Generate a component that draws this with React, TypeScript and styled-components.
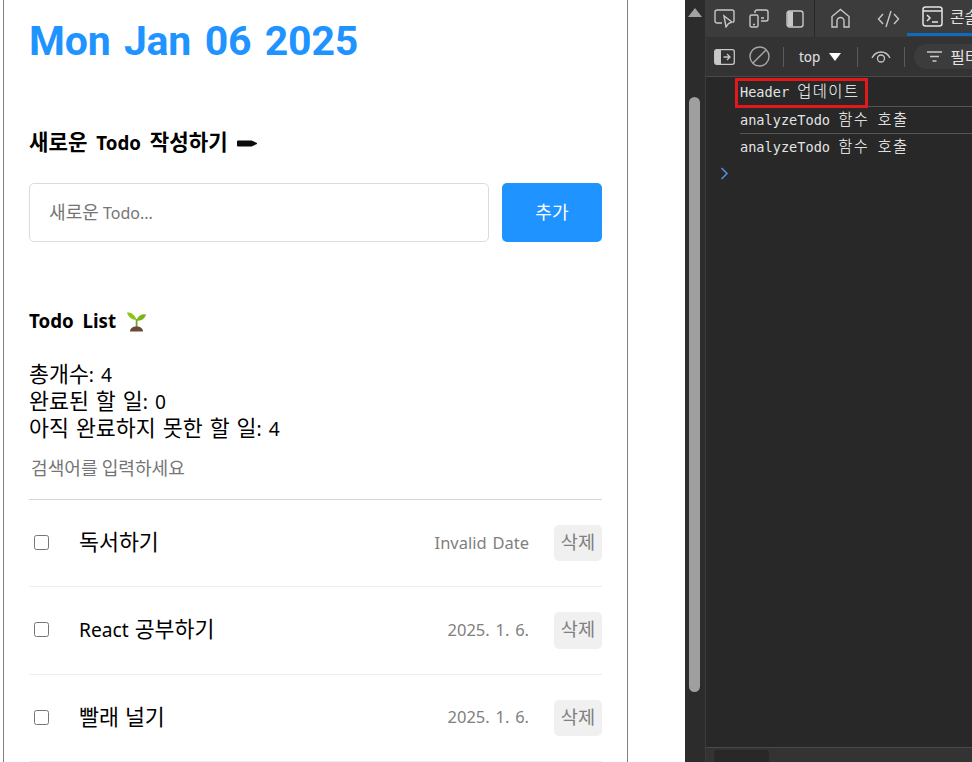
import React from "react";
import styled, { createGlobalStyle } from "styled-components";

const Global = createGlobalStyle`
  html, body { margin: 0; padding: 0; height: 100%; overflow: hidden; background: #fff; }
  body { font-family: "Noto Sans", "Noto Sans CJK KR", sans-serif; }
  * { box-sizing: border-box; }
`;
const KR = `"Noto Sans", "Noto Sans CJK KR", sans-serif`;
const MONO = `"DejaVu Sans Mono", "Noto Sans CJK KR", monospace`;

const Hangul = styled.span`
  display: inline-block;
  font-family: "Noto Sans CJK KR", sans-serif;
  font-size: 1.13em;
  line-height: 1;
`;
const K = ({ children }: { children: string }) => (
  <>
    {children.split(/([\uAC00-\uD7A3]+)/).map((part, i) =>
      i % 2 ? <Hangul key={i}>{part}</Hangul> : part,
    )}
  </>
);

const Page = styled.div`
  display: flex; width: 972px; height: 762px; overflow: hidden; background: #fff;
`;
const Viewport = styled.div`
  width: 685px; height: 762px; padding-left: 3px; flex: none; overflow: hidden;
`;
const AppBox = styled.main`
  width: 625px; border-left: 1px solid #7f7f7f; border-right: 1px solid #7f7f7f;
  height: 762px; padding: 0 25px; font-family: ${KR}; color: #000; overflow: hidden;
`;
const DateTitle = styled.h1`
  margin: 0; padding-top: 14px; height: 130px; color: #1f93ff; font-size: 41px; line-height: 55px;
  font-family: Roboto, sans-serif; font-weight: 700; letter-spacing: -0.2px; word-spacing: 3.5px;
`;
const SectionTitle = styled.h4`
  margin: 0; font-size: 18.72px; line-height: 26px; height: 26px; font-weight: 700;
  display: flex; align-items: center; word-spacing: 4px; white-space: pre;
`;
const Editor = styled.section`
  display: flex; gap: 13px; margin-top: 27px; margin-bottom: 66px;
`;
const NewInput = styled.div`
  flex: 1; height: 59px; border: 1px solid #dcdcdc; border-radius: 5px; padding-left: 19px;
  display: flex; align-items: center; font-size: 16px; color: #757575; white-space: pre;
`;
const AddButton = styled.button`
  width: 100px; height: 59px; border: none; border-radius: 5px; background: #1f93ff; color: #fff;
  font-family: ${KR}; font-size: 16px; padding: 0;
`;
const Stats = styled.div`
  margin-top: 27px; font-size: 19.2px; line-height: 27px; word-spacing: 2px;
`;
const Search = styled.div`
  margin-top: 9px; height: 49px; border-bottom: 1px solid #d5d5d5; padding: 6px 0 0 2px;
  font-size: 16px; line-height: 24px; color: #757575;
`;
const Row = styled.div`
  height: 87.330px; border-bottom: 1px solid #eeeeee; display: flex; align-items: center;
`;
const Check = styled.input`
  width: 15px; height: 15px; margin: 0 0 1px 5px; flex: none;
`;
const Content = styled.div`
  margin-left: 30px; flex: 1; font-size: 19.2px; word-spacing: 1px; white-space: pre; padding-bottom: 1px;
`;
const DateText = styled.div`
  font-size: 16.5px; color: #808080; margin-right: 25px; word-spacing: 1.500px; padding-bottom: 2px;
`;
const Del = styled.button`
  width: 48px; height: 36.500px; border: none; border-radius: 5px; background: #f0f0f0; color: #808080;
  font-family: ${KR}; font-size: 16.500px; line-height: 30px; padding: 0;
`;

const ScrollStrip = styled.div`
  position: relative; width: 21px; flex: none; background: #2c2c2c; border-right: 1px solid #3c3c3c;
`;
const ScrollThumb = styled.div`
  position: absolute; left: 4px; top: 97px; width: 11px; height: 595px; border-radius: 6px; background: #9f9f9f;
`;
const ScrollArrow = styled.div`
  position: absolute; left: 3px; top: 8px; width: 0; height: 0;
  border-left: 7px solid transparent; border-right: 7px solid transparent; border-bottom: 9px solid #a3a3a3;
`;
const Devtools = styled.div`
  flex: 1; min-width: 0; background: #282828; display: flex; flex-direction: column; color: #e3e3e3;
  overflow: hidden;
`;
const TabBar = styled.div`
  height: 37px; flex: none; background: #3c3c3c; display: flex; align-items: flex-start; padding-left: 1px;
  white-space: nowrap;
`;
const IconSlot = styled.div<{ $w: number; $pl?: number }>`
  width: ${(p) => p.$w}px; padding-left: ${(p) => p.$pl ?? 0}px; flex: none; height: 37px;
  display: flex; align-items: center; justify-content: center;
`;
const VDivider = styled.div`
  width: 1px; height: 37px; background: #282828; margin-left: 2px; flex: none;
`;
const ConsoleTab = styled.div`
  height: 36px; display: flex; align-items: center; gap: 7px; padding-left: 15px; flex: none; width: 80px;
  border-bottom: 3px solid #0f6cbd; font-size: 14px; font-family: ${KR};
`;
const Toolbar = styled.div`
  height: 40px; flex: none; background: #333333; border-bottom: 1px solid #4a4a4a; display: flex; align-items: center;
  padding-left: 8px; font-family: ${KR}; font-size: 13.5px; white-space: nowrap;
`;
const TbDivider = styled.div<{ $l: number; $r: number }>`
  width: 1px; height: 20px; background: #5a5a5a; flex: none;
  margin: 0 ${(p) => p.$r}px 0 ${(p) => p.$l}px;
`;
const TopCaret = styled.span`
  display: inline-block; margin-left: 9px; width: 0; height: 0; vertical-align: 1px;
  border-left: 6.500px solid transparent; border-right: 6.500px solid transparent; border-top: 8px solid #fff;
`;
const Filter = styled.div`
  display: flex; align-items: center; gap: 8px; height: 25px; border-radius: 13px; background: #3c3c3c;
  padding-left: 13px; width: 90px; flex: none; color: #e3e3e3; font-size: 14px;
`;
const Logs = styled.div`
  flex: 1; min-height: 0; padding: 2px 0 0 34px; font-family: ${MONO}; font-size: 13.6px;
`;
const Log = styled.div`
  position: relative; height: 27px; line-height: 27px; color: #e3e3e3; white-space: pre;
  & + & { border-top: 1px solid #545454; line-height: 26px; }
  ${Hangul} { letter-spacing: 1.4px; font-weight: 300; color: #ffffff; }
`;
const Highlight = styled.div`
  position: absolute; left: -5px; top: -1px; width: 133px; height: 30px; border: 3px solid #e2191c; z-index: 1;
`;
const Prompt = styled.div`
  margin: 7px 0 0 -20px; height: 14px;
`;
const Drawer = styled.div`
  height: 15px; flex: none; background: #333333; border-top: 1px solid #4a4a4a; padding-left: 8px;
`;
const DrawerTab = styled.div`
  width: 55px; height: 14px; margin-top: 2px; background: #282828; border-radius: 3px 3px 0 0;
`;

const stroke = { fill: "none", stroke: "#c7c7c7", strokeWidth: 1.4 } as const;

const Pen = () => (
  <svg width="20" height="7" viewBox="0 0 20 7" style={{ marginLeft: 9 }}>
    <path d="M1 0.500h13.500L20 3v1l-5.500 2.500H1a1 1 0 0 1-1-1v-4a1 1 0 0 1 1-1z" fill="#0c0c0c" />
  </svg>
);
const Sprout = () => (
  <svg width="19" height="21" viewBox="0 0 19 21" style={{ marginLeft: 11 }}>
    <path d="M8.700 8h1.800v9H8.700z" fill="#7a9a3a" />
    <path d="M9.500 9C8 3.500 4 1 0 1.500 1 6 5 9 9.500 9z" fill="#8fc31f" />
    <path d="M9.500 9.500c1-4 5-7 9.500-6-1 4-5 7-9.500 6z" fill="#7cb518" />
    <path d="M3 20.500c0-3 2.500-5 6.500-5s6.500 2 6.500 5z" fill="#6b4a35" />
  </svg>
);

const todos = [
  { text: "독서하기", date: "Invalid Date" },
  { text: "React 공부하기", date: "2025. 1. 6." },
  { text: "빨래 널기", date: "2025. 1. 6." },
];

export default function App() {
  return (
    <Page>
      <Global />
      <Viewport>
        <AppBox>
          <DateTitle>Mon Jan 06 2025</DateTitle>
          <SectionTitle><span><K>새로운 Todo 작성하기</K></span><Pen /></SectionTitle>
          <Editor>
            <NewInput><span><K>새로운 Todo...</K></span></NewInput>
            <AddButton><K>추가</K></AddButton>
          </Editor>
          <SectionTitle>Todo List<Sprout /></SectionTitle>
          <Stats>
            <div><K>총개수: 4</K></div>
            <div><K>완료된 할 일: 0</K></div>
            <div><K>아직 완료하지 못한 할 일: 4</K></div>
          </Stats>
          <Search><K>검색어를 입력하세요</K></Search>
          {todos.map((t) => (
            <Row key={t.text}>
              <Check type="checkbox" />
              <Content><K>{t.text}</K></Content>
              <DateText>{t.date}</DateText>
              <Del><K>삭제</K></Del>
            </Row>
          ))}
        </AppBox>
      </Viewport>
      <ScrollStrip>
        <ScrollArrow />
        <ScrollThumb />
      </ScrollStrip>
      <Devtools>
        <TabBar>
          <IconSlot $w={35}>
            <svg width="21" height="19" viewBox="0 0 21 19" {...stroke}>
              <path d="M8 14H3a2 2 0 0 1-2-2V3a2 2 0 0 1 2-2h15a2 2 0 0 1 2 2v9a2 2 0 0 1-1 1.500" />
              <path d="M10 7l2 11 2.500-3.500L18 13z" />
            </svg>
          </IconSlot>
          <IconSlot $w={35}>
            <svg width="21" height="19" viewBox="0 0 21 19" {...stroke}>
              <rect x="1" y="6" width="8" height="12" rx="1.500" />
              <path d="M6 4V3a2 2 0 0 1 2-2h9a2 2 0 0 1 2 2v7a2 2 0 0 1-2 2h-5M12 9h3" />
              <path d="M4 15.500h2" />
            </svg>
          </IconSlot>
          <IconSlot $w={35}>
            <svg width="18" height="18" viewBox="0 0 18 18">
              <rect x="1" y="1" width="16" height="16" rx="2.500" fill="none" stroke="#c7c7c7" strokeWidth="1.4" />
              <path d="M3 1.500h4v15H3a1.500 1.500 0 0 1-1.500-1.500V3A1.500 1.500 0 0 1 3 1.500z" fill="#c7c7c7" />
            </svg>
          </IconSlot>
          <VDivider />
          <IconSlot $w={50}>
            <svg width="21" height="21" viewBox="0 0 21 21" {...stroke}>
              <path d="M2 19V8.500L10.500 1.500 19 8.500V19h-5v-6a3.500 3.500 0 0 0-7 0v6z" />
            </svg>
          </IconSlot>
          <IconSlot $w={42} $pl={5}>
            <svg width="23" height="18" viewBox="0 0 23 18" {...stroke}>
              <path d="M6 4L1.500 9 6 14M17 4l4.500 5-4.500 5M14 1L9 17" />
            </svg>
          </IconSlot>
          <ConsoleTab>
            <svg width="21" height="21" viewBox="0 0 21 21" style={{ flex: "none" }} fill="none" stroke="#e3e3e3" strokeWidth="1.5">
              <rect x="1" y="1" width="19" height="19" rx="2.500" />
              <path d="M1 5h19" />
              <path d="M5 9l3 3-3 3M10 16h6" />
            </svg>
            <K>콘솔</K>
          </ConsoleTab>
        </TabBar>
        <Toolbar>
          <svg width="21" height="16" viewBox="0 0 21 16" style={{ flex: "none" }}>
            <rect x="0.700" y="0.700" width="19.600" height="14.600" rx="2" fill="none" stroke="#c7c7c7" strokeWidth="1.300" />
            <path d="M2 1h5v14H2a1 1 0 0 1-1-1V2a1 1 0 0 1 1-1z" fill="#c7c7c7" />
            <path d="M9.500 8h6M13 5l3 3-3 3" fill="none" stroke="#c7c7c7" strokeWidth="1.300" />
          </svg>
          <svg width="21" height="21" viewBox="0 0 21 21" fill="none" stroke="#a8a8a8" strokeWidth="1.400" style={{ flex: "none", marginLeft: 14 }}>
            <circle cx="10.500" cy="10.500" r="9.500" />
            <path d="M4 17L17 4" />
          </svg>
          <TbDivider $l={13} $r={15} />
          <span>top<TopCaret /></span>
          <TbDivider $l={16} $r={13} />
          <svg width="20" height="12" viewBox="0 0 20 12" fill="none" stroke="#c7c7c7" strokeWidth="1.300" style={{ flex: "none" }}>
            <path d="M1 7c2-4 5.500-6 9-6s7 2 9 6" />
            <circle cx="10" cy="7.500" r="3.500" />
          </svg>
          <TbDivider $l={13} $r={9} />
          <Filter>
            <svg width="15" height="11" viewBox="0 0 15 11" stroke="#c7c7c7" strokeWidth="1.400" style={{ flex: "none" }}>
              <path d="M0 1h15M3 5.500h9M5.500 10h4" />
            </svg>
            <K>필터</K>
          </Filter>
        </Toolbar>
        <Logs>
          <Log>
            <K>Header 업데이트</K>
            <Highlight />
          </Log>
          <Log><K>analyzeTodo 함수 호출</K></Log>
          <Log><K>analyzeTodo 함수 호출</K></Log>
          <Prompt>
            <svg width="9" height="13" viewBox="0 0 9 13" fill="none" stroke="#5a8fe0" strokeWidth="1.500">
              <path d="M1.500 1l5.500 5.500L1.500 12" />
            </svg>
          </Prompt>
        </Logs>
        <Drawer>
          <DrawerTab />
        </Drawer>
      </Devtools>
    </Page>
  );
}
